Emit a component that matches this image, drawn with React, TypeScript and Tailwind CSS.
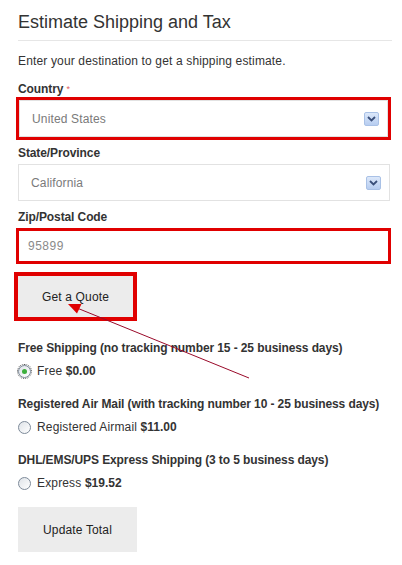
import React from "react";

// Small blue dropdown button drawn at the right of a select
const DropIcon: React.FC = () => (
  <span className="flex h-[14px] w-[15px] items-center justify-center rounded-[2px] border border-[#a9c1e6] bg-gradient-to-b from-[#dce8fa] to-[#b7cdf0]">
    <svg width="9" height="6" viewBox="0 0 9 6">
      <path d="M1 1 L4.5 4.5 L8 1" fill="none" stroke="#3a4f7a" strokeWidth="1.8" />
    </svg>
  </span>
);

const SelectBox: React.FC<{ value: string }> = ({ value }) => (
  <div className="flex h-[37px] items-center justify-between border border-[#e2e2e2] bg-white pl-[12px] pr-[8px]">
    <span className="text-[12px] tracking-[0.15px] text-[#7a7a7a]">{value}</span>
    <DropIcon />
  </div>
);

const Radio: React.FC<{ checked?: boolean }> = ({ checked }) => (
  <span
    className={
      checked
        ? "flex h-[15px] w-[15px] items-center justify-center rounded-full border border-dotted border-[#555]"
        : "flex h-[15px] w-[15px] items-center justify-center"
    }
  >
    <span className="flex h-[13px] w-[13px] items-center justify-center rounded-full border border-[#7d8a99] bg-gradient-to-br from-[#dfe3e8] to-white">
      {checked && <span className="h-[5px] w-[5px] rounded-full bg-[#3cae3c]" />}
    </span>
  </span>
);

const options = [
  {
    title: "Free Shipping (no tracking number 15 - 25 business days)",
    name: "Free",
    price: "$0.00",
    checked: true,
  },
  {
    title: "Registered Air Mail (with tracking number 10 - 25 business days)",
    name: "Registered Airmail",
    price: "$11.00",
    checked: false,
  },
  {
    title: "DHL/EMS/UPS Express Shipping (3 to 5 business days)",
    name: "Express",
    price: "$19.52",
    checked: false,
  },
];

const App: React.FC = () => {
  return (
    <div className="relative h-[565px] w-[402px] overflow-hidden bg-white pl-[18px] pr-[10px] font-['Liberation_Sans',Arial,sans-serif] text-[#333]">
      {/* Heading */}
      <div className="h-[41px] border-b border-[#e6e6e6] pt-[11px]">
        <h2 className="text-[18px] leading-[22px] text-[#333]">Estimate Shipping and Tax</h2>
      </div>

      <p className="mt-[12px] text-[12px] leading-[16px] tracking-[0.15px]">
        Enter your destination to get a shipping estimate.
      </p>

      {/* Country */}
      <div className="mt-[12px] text-[12px] font-bold leading-[16px] tracking-[-0.1px]">
        Country <span className="align-top text-[9px] font-normal text-[#e06060]">*</span>
      </div>
      <div className="-ml-[2px] w-[375px] border-[3px] border-[#e00000]">
        <SelectBox value="United States" />
      </div>

      {/* State */}
      <div className="mt-[5px] text-[12px] font-bold leading-[16px] tracking-[-0.1px]">State/Province</div>
      <div className="mt-[3px] w-[372px]">
        <SelectBox value="California" />
      </div>

      {/* Zip */}
      <div className="mt-[8px] text-[12px] font-bold leading-[16px] tracking-[-0.1px]">Zip/Postal Code</div>
      <div className="-ml-[2px] mt-[3px] flex h-[36px] w-[375px] items-center border-[3px] border-[#e00000] bg-white pl-[9px]">
        <span className="text-[12px] tracking-[0.5px] text-[#8a8a8a]">95899</span>
      </div>

      {/* Get a Quote */}
      <div className="-ml-[4px] mt-[8px] w-[123px] border-[4px] border-[#e00000]">
        <button className="flex h-[41px] w-full items-center justify-center bg-[#ececec] text-[12px] tracking-[0.15px] text-[#222]">
          Get a Quote
        </button>
      </div>

      {/* Shipping options */}
      <div className="mt-[19px] flex flex-col gap-[17px]">
        {options.map((opt) => (
          <div key={opt.name}>
            <div className="text-[12px] font-bold leading-[16px] tracking-[-0.1px]">{opt.title}</div>
            <label className="-ml-[1px] mt-[7px] flex items-center gap-[5px] text-[12px] leading-[16px] tracking-[0.15px]">
              <Radio checked={opt.checked} />
              <span>
                {opt.name} <b className="tracking-normal">{opt.price}</b>
              </span>
            </label>
          </div>
        ))}
      </div>

      <button className="mt-[16px] flex h-[45px] w-[119px] items-center justify-center bg-[#ececec] text-[12px] tracking-[0.15px] text-[#222]">
        Update Total
      </button>

      {/* Annotation arrow over the page */}
      <svg className="pointer-events-none absolute left-0 top-0" width="402" height="565">
        <line x1="249" y1="378" x2="77" y2="308" stroke="#9a0a2a" strokeWidth="1" />
        <polygon points="68,304 81.5,304 77,313.5" fill="#e00000" />
      </svg>
    </div>
  );
};

export default App;
